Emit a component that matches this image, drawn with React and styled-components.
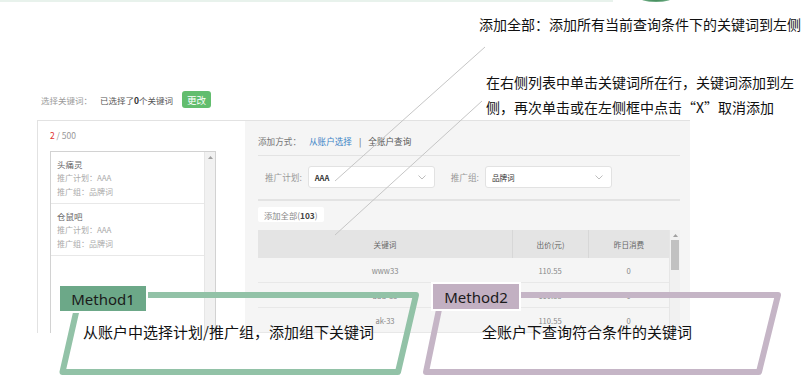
import React from 'react';
import styled, { createGlobalStyle } from 'styled-components';

const GlobalStyle = createGlobalStyle`
  html, body {
    margin: 0;
    padding: 0;
    background: #fff;
  }
  body {
    font-family: "Noto Sans CJK SC", "Noto Sans", sans-serif;
  }
`;

const Page = styled.div`
  position: relative;
  width: 804px;
  height: 381px;
  overflow: hidden;
  background: #fff;
`;

const TopRule = styled.div`
  width: 613px;
  height: 2px;
  background: #e8f2ec;
`;

const TopArc = styled.div`
  position: absolute;
  left: 638px;
  top: -9px;
  width: 36px;
  height: 11px;
  border-radius: 50%;
  background: radial-gradient(ellipse at center, #2f7d48 40%, #7fb894 75%, rgba(255, 255, 255, 0) 100%);
`;

const Note = styled.div`
  margin: ${({ $top }) => $top || 0}px 0 0 ${({ $indent }) => $indent || 0}px;
  font-size: 14px;
  line-height: ${({ $lh }) => $lh || 20}px;
  color: #111;
  white-space: nowrap;
`;

const Header = styled.div`
  display: grid;
  grid-template-columns: 486px 1fr;
  height: 86px;
`;

const SelectBar = styled.div`
  display: flex;
  align-items: center;
  align-self: start;
  height: 17px;
  margin: 57px 0 0 41px;
  font-size: 8.5px;
`;

const BarLabel = styled.span`
  color: #9a9a9a;
`;

const BarCount = styled.span`
  margin-left: 8px;
  color: #555;

  b {
    color: #333;
  }
`;

const ChangeButton = styled.span`
  display: inline-flex;
  align-items: center;
  justify-content: center;
  width: 29px;
  height: 17px;
  margin-left: 9px;
  border-radius: 3px;
  background: #62bd6e;
  color: #fff;
  font-size: 9.5px;
`;

const Panel = styled.div`
  display: grid;
  grid-template-columns: 207px 1fr;
  box-sizing: border-box;
  width: 653px;
  height: 213px;
  margin-left: 37px;
  overflow: hidden;
  border-top: 1px solid #e2e2e2;
  border-left: 1px solid #e2e2e2;
`;

const LeftCol = styled.div`
  display: flex;
  flex-direction: column;
  padding: 7px 0 0 12px;
  background: #fff;
`;

const Counter = styled.div`
  font-size: 8.5px;
  line-height: 14px;
  color: #999;

  em {
    font-style: normal;
    color: #e0322f;
  }
`;

const ListBox = styled.div`
  display: flex;
  width: 164px;
  flex: 1;
  margin-top: 9px;
  border: 1px solid #d2d2d2;
  border-bottom: none;
`;

const ListItems = styled.div`
  flex: 1;
`;

const Item = styled.div`
  padding: 5px 6px 4px;
  border-bottom: 1px solid #e8e8e8;
`;

const ItemLine = styled.div`
  font-size: ${({ $name }) => ($name ? 8.5 : 8)}px;
  line-height: 14px;
  color: ${({ $name }) => ($name ? '#666' : '#aaa')};
  white-space: nowrap;
`;

const ScrollTrack = styled.div`
  display: flex;
  flex-direction: column;
  align-items: center;
  width: 10px;
  background: #f1f1f1;
  border-left: 1px solid #e6e6e6;
`;

const ScrollArrow = styled.svg`
  margin-top: 4px;
  flex: none;
`;

const ScrollThumb = styled.div`
  width: 8px;
  height: 30px;
  margin-top: 3px;
  background: #c1c1c1;
`;

const RightCol = styled.div`
  display: flex;
  flex-direction: column;
  padding: 0 10px 0 13px;
  background: #f5f5f5;
`;

const ModeRow = styled.div`
  display: flex;
  align-items: center;
  height: 28px;
  padding-top: 6px;
  border-bottom: 1px solid #e3e3e3;
  font-size: 8.6px;
  color: #777;
`;

const ModeLink = styled.span`
  margin-left: ${({ $gap }) => $gap || 0}px;
  color: ${({ $active }) => ($active ? '#3d84c6' : '#555')};
`;

const FilterRow = styled.div`
  display: flex;
  align-items: flex-start;
  height: 33px;
  padding: 10px 0 0 7px;
  border-bottom: 2px solid #e3e3e3;
`;

const FilterLabel = styled.span`
  margin-left: ${({ $gap }) => $gap || 0}px;
  line-height: 22px;
  font-size: 8.6px;
  color: #999;
`;

const SelectBox = styled.div`
  display: flex;
  align-items: center;
  justify-content: space-between;
  box-sizing: border-box;
  width: 127px;
  height: 22px;
  margin-left: 6px;
  padding: 0 8px 0 6px;
  border: 1px solid #e2e2e2;
  border-radius: 3px;
  background: #fff;
  font-size: 7.6px;
  color: #333;
`;

const AddAllButton = styled.div`
  align-self: flex-start;
  display: flex;
  align-items: center;
  height: 15px;
  margin-top: 6px;
  padding: 0 6px;
  border-radius: 2px;
  background: #fff;
  font-size: 8.3px;
  color: #888;

  b {
    color: #444;
  }
`;

const TableWrap = styled.div`
  display: flex;
  margin-top: 8px;
`;

const Table = styled.div`
  width: 411px;
`;

const TRow = styled.div`
  display: grid;
  grid-template-columns: 254px 76px 81px;
  height: ${({ $head }) => ($head ? 28 : 24)}px;
  background: ${({ $head }) => ($head ? '#e4e4e4' : 'transparent')};
  border-bottom: ${({ $head }) => ($head ? 'none' : '1px solid #e8e8e8')};
`;

const TCell = styled.div`
  display: flex;
  align-items: center;
  justify-content: center;
  font-size: 7.6px;
  color: ${({ $head }) => ($head ? '#666' : '#888')};
  border-left: ${({ $divider }) => ($divider ? '1px solid #d7d7d7' : 'none')};
`;

const Callout = styled.div`
  position: absolute;
  left: ${({ $x }) => $x}px;
  top: ${({ $y }) => $y}px;
`;

const Frame = styled.svg`
  position: absolute;
  left: 0;
  top: 0;
  overflow: visible;
`;

const MethodTag = styled.div`
  position: relative;
  display: flex;
  align-items: center;
  justify-content: center;
  width: 86px;
  height: 25px;
  border: 2px solid #fff;
  background: ${({ $fill }) => $fill};
  font-family: "Noto Sans", sans-serif;
  font-size: 15px;
  color: #1b1b1b;
`;

const CalloutText = styled.div`
  position: relative;
  margin: ${({ $gap }) => $gap}px 0 0 ${({ $indent }) => $indent}px;
  font-size: 15px;
  line-height: 20px;
  color: #111;
  white-space: nowrap;
`;

const Leaders = styled.svg`
  position: absolute;
  left: 0;
  top: 0;
  pointer-events: none;
`;

const Arrow = () => (
  <ScrollArrow width="5" height="3" viewBox="0 0 5 3">
    <path d="M0 3 L2.5 0 L5 3 Z" fill="#a0a0a0" />
  </ScrollArrow>
);

const Chevron = () => (
  <svg width="8" height="5" viewBox="0 0 8 5">
    <path d="M0.5 0.5 L4 4 L7.5 0.5" fill="none" stroke="#b5b5b5" strokeWidth="0.9" />
  </svg>
);

const picked = [
  { name: '头痛灵', plan: 'AAA', group: '品牌词' },
  { name: '仓鼠吧', plan: 'AAA', group: '品牌词' },
];

const rows = [
  ['www33', '110.55', '0'],
  ['bbb-33', '110.55', '0'],
  ['ak-33', '110.55', '0'],
];

const MethodCallout = ({ x, y, points, stroke, fill, label, text, indent, gap }) => (
  <Callout $x={x} $y={y}>
    <Frame width="360" height="95">
      <polygon points={points} fill="none" stroke={stroke} strokeWidth="6" strokeLinejoin="round" />
    </Frame>
    <MethodTag $fill={fill}>{label}</MethodTag>
    <CalloutText $indent={indent} $gap={gap}>{text}</CalloutText>
  </Callout>
);

export default function App() {
  return (
    <Page>
      <GlobalStyle />
      <TopRule />
      <TopArc />
      <Note $top={12} $indent={479}>添加全部：添加所有当前查询条件下的关键词到左侧</Note>

      <Header>
        <SelectBar>
          <BarLabel>选择关键词：</BarLabel>
          <BarCount>
            已选择了<b>0</b>个关键词
          </BarCount>
          <ChangeButton>更改</ChangeButton>
        </SelectBar>
        <Note $top={36} $lh={25}>
          在右侧列表中单击关键词所在行，关键词添加到左
          <br />
          侧，再次单击或在左侧框中点击“X”取消添加
        </Note>
      </Header>

      <Panel>
        <LeftCol>
          <Counter>
            <em>2</em> / 500
          </Counter>
          <ListBox>
            <ListItems>
              {picked.map((it) => (
                <Item key={it.name}>
                  <ItemLine $name>{it.name}</ItemLine>
                  <ItemLine>推广计划：{it.plan}</ItemLine>
                  <ItemLine>推广组：{it.group}</ItemLine>
                </Item>
              ))}
            </ListItems>
            <ScrollTrack>
              <Arrow />
            </ScrollTrack>
          </ListBox>
        </LeftCol>

        <RightCol>
          <ModeRow>
            <span>添加方式：</span>
            <ModeLink $active $gap={8}>从账户选择</ModeLink>
            <ModeLink $gap={7}>|</ModeLink>
            <ModeLink $gap={7}>全账户查询</ModeLink>
          </ModeRow>

          <FilterRow>
            <FilterLabel>推广计划:</FilterLabel>
            <SelectBox>
              <b>AAA</b>
              <Chevron />
            </SelectBox>
            <FilterLabel $gap={16}>推广组:</FilterLabel>
            <SelectBox>
              <span>品牌词</span>
              <Chevron />
            </SelectBox>
          </FilterRow>

          <AddAllButton>
            添加全部(<b>103</b>)
          </AddAllButton>

          <TableWrap>
            <Table>
              <TRow $head>
                <TCell $head>关键词</TCell>
                <TCell $head $divider>出价(元)</TCell>
                <TCell $head $divider>昨日消费</TCell>
              </TRow>
              {rows.map(([kw, bid, cost]) => (
                <TRow key={kw}>
                  <TCell>{kw}</TCell>
                  <TCell>{bid}</TCell>
                  <TCell>{cost}</TCell>
                </TRow>
              ))}
            </Table>
            <ScrollTrack>
              <Arrow />
              <ScrollThumb />
            </ScrollTrack>
          </TableWrap>
        </RightCol>
      </Panel>

      <Leaders width="804" height="381">
        <line x1="485" y1="47" x2="335" y2="181" stroke="#c6c6c6" strokeWidth="1" />
        <line x1="482" y1="101" x2="335" y2="235" stroke="#c6c6c6" strokeWidth="1" />
      </Leaders>

      <MethodCallout
        x={58}
        y={284}
        points="22,11 358,11 340,88 4.5,88"
        stroke="#92c2a7"
        fill="#6ca888"
        label="Method1"
        text="从账户中选择计划/推广组，添加组下关键词"
        indent={25}
        gap={9}
      />
      <MethodCallout
        x={431}
        y={282}
        points="11,13 347,13 328,90 -5,90"
        stroke="#c5b5c6"
        fill="#c2b0c2"
        label="Method2"
        text="全账户下查询符合条件的关键词"
        indent={51}
        gap={11}
      />
    </Page>
  );
}
